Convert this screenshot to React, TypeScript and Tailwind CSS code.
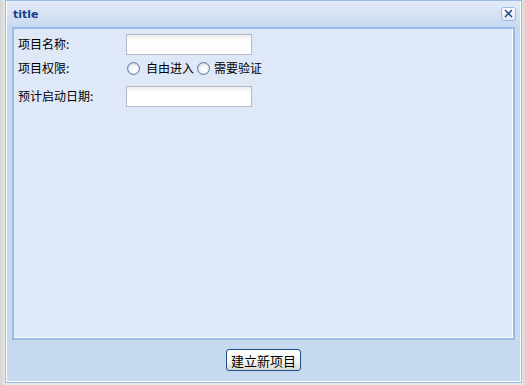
import React from "react";

const font = { fontFamily: '"Noto Sans CJK SC", "Liberation Sans", sans-serif' };

function Radio() {
  return (
    <span className="inline-block w-[13px] h-[13px] rounded-full border border-[#5b7ea6] bg-[radial-gradient(circle_at_60%_65%,#ffffff_0%,#f2f4f7_45%,#c9d2dd_100%)] shadow-[inset_0_0_1px_#8aa4c4]" />
  );
}

function TextField() {
  return (
    <div className="w-[126px] h-[21px] border border-[#b5b8c8] bg-[linear-gradient(to_bottom,#eeeeee_0px,#ffffff_6px,#ffffff_100%)]" />
  );
}

export default function App() {
  return (
    <div
      className="w-[526px] h-[385px] bg-[linear-gradient(to_right,#d4d4d4,#e8e8e8_5px,#e8e8e8_521px,#d4d4d4)] overflow-hidden"
      style={font}
    >
      <div className="ml-[5px] w-[517px] h-[383px] border border-[#99bbe8] bg-[#c6d9ee] flex flex-col">
        <div className="flex-1 flex flex-col border border-white border-t-0">
          {/* title bar */}
          <div className="h-[26px] flex items-center justify-between pl-[6px] pr-[4px] bg-[linear-gradient(to_bottom,#e3ebf7,#c8daf1)]">
            <span className="font-bold text-[#15428b] leading-none" style={{ fontFamily: '"DejaVu Sans", "Liberation Sans", sans-serif', fontSize: "11px" }}>
              title
            </span>
            <div className="w-[15px] h-[14px] rounded-[3px] border border-[#99bbe8] bg-[linear-gradient(to_bottom,#ffffff,#dfe8f6)] flex items-center justify-center mb-[1px]">
              <svg width="9" height="9" viewBox="0 0 9 9">
                <path d="M1 1 L8 8 M8 1 L1 8" stroke="#15428b" strokeWidth="1.4" />
              </svg>
            </div>
          </div>
          {/* body panel */}
          <div className="mx-[5px] h-[313px] border-2 border-[#99bbe8] bg-[#dfe8f6]">
            <div className="h-full border-r border-b border-white pt-[4px] pl-[4px] text-[12px] text-[#000000]">
              <div className="flex items-center h-[22px]">
                <span className="w-[108px]">项目名称:</span>
                <TextField />
              </div>
              <div className="flex items-center h-[26px] mt-[0px]">
                <span className="w-[109px]">项目权限:</span>
                <Radio />
                <span className="ml-[6px] mr-[3px]">自由进入</span>
                <Radio />
                <span className="ml-[4px]">需要验证</span>
              </div>
              <div className="flex items-center h-[22px] mt-[4px]">
                <span className="w-[108px]">预计启动日期:</span>
                <TextField />
              </div>
            </div>
          </div>
          {/* footer */}
          <div className="flex-1 flex items-center justify-center pb-[1px]">
            <button className="w-[75px] h-[22px] rounded-[3px] border border-[#1c4d83] bg-[linear-gradient(to_bottom,#ffffff,#f4f4f0_60%,#d8d8d2)] text-[13px] text-black leading-none flex items-center justify-center">
              建立新项目
            </button>
          </div>
        </div>
      </div>
    </div>
  );
}
